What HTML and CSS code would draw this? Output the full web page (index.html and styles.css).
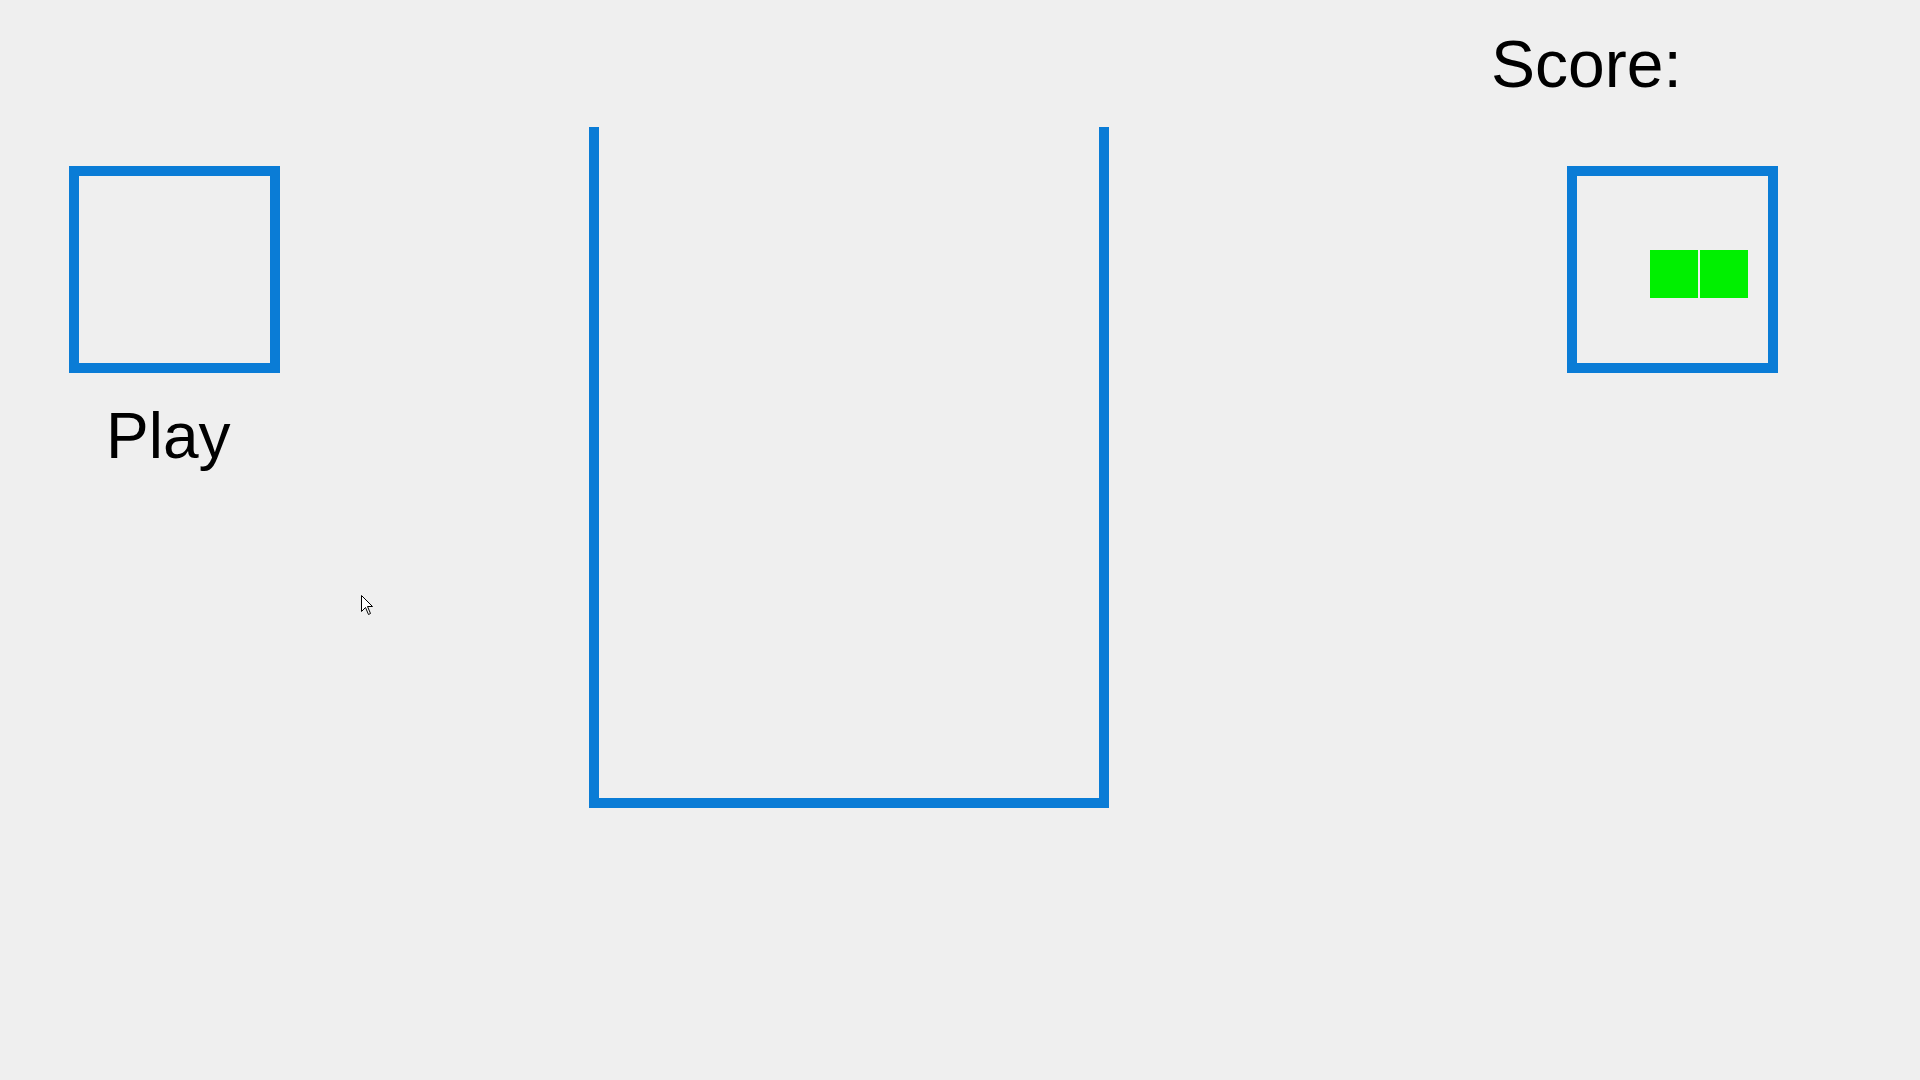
FILE: index.html
```html
<!DOCTYPE html>
<html>
<head>
<meta charset="utf-8">
<link rel="stylesheet" href="styles.css">
<title>Tetris</title>
</head>
<body>
<div class="game">
  <div class="left-col">
    <div class="hold-box"></div>
    <div class="play">Play</div>
  </div>
  <div class="well"></div>
  <div class="right-col">
    <div class="score">Score:</div>
    <div class="next-box">
      <div class="piece">
        <div class="cell"></div>
        <div class="cell"></div>
      </div>
    </div>
  </div>
</div>
<svg class="cursor" width="13" height="21" viewBox="0 0 13 21">
  <path d="M0.5 0.5 L0.5 16.5 L4.5 12.5 L7.5 19.5 L9.5 18.5 L6.5 11.5 L11.5 11.5 Z" fill="#fff" stroke="#000" stroke-width="1"/>
</svg>
</body>
</html>
```
FILE: styles.css
```css
html, body {
  margin: 0;
  padding: 0;
  width: 1920px;
  height: 1080px;
  overflow: hidden;
  background: #efefef;
  font-family: "Liberation Sans", Arial, sans-serif;
  color: #000;
}
.game {
  display: flex;
  align-items: flex-start;
  padding-left: 69px;
}
.left-col {
  width: 211px;
  margin-top: 166px;
  display: flex;
  flex-direction: column;
}
.hold-box, .next-box {
  width: 211px;
  height: 207px;
  box-sizing: border-box;
  border: 10px solid #0a7cd6;
}
.play {
  margin-top: 31px;
  margin-left: 37px;
  font-size: 64px;
  line-height: 64px;
}
.well {
  margin-left: 309px;
  margin-top: 127px;
  width: 520px;
  height: 681px;
  box-sizing: border-box;
  border: 10px solid #0a7cd6;
  border-top: none;
}
.right-col {
  margin-left: 382px;
  display: flex;
  flex-direction: column;
}
.score {
  margin-top: 32px;
  font-size: 66px;
  line-height: 64px;
}
.next-box {
  margin-top: 70px;
  margin-left: 76px;
  padding: 74px 0 0 73px;
}
.piece {
  display: flex;
  gap: 2px;
}
.cell {
  width: 48px;
  height: 48px;
  background: #00f000;
}
.cursor {
  position: absolute;
  left: 361px;
  top: 595px;
}
```
